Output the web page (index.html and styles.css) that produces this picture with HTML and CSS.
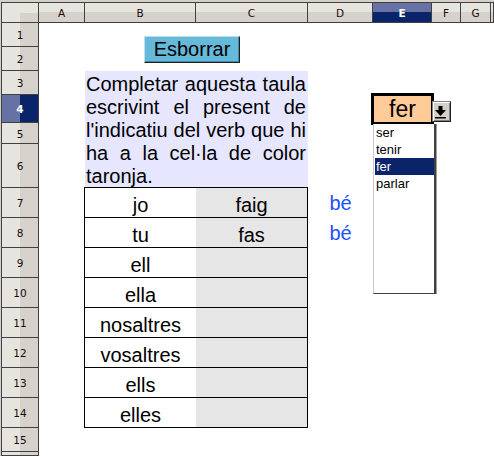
FILE: index.html
```html
<!DOCTYPE html>
<html>
<head>
<meta charset="utf-8">
<link rel="stylesheet" href="styles.css">
</head>
<body>
<div class="frame">
  <div class="corner"></div>
  <div class="colheads">
    <div class="ch">A</div>
    <div class="ch">B</div>
    <div class="ch">C</div>
    <div class="ch">D</div>
    <div class="ch sel">E</div>
    <div class="ch">F</div>
    <div class="ch">G</div>
    <div class="ch"></div>
  </div>
  <div class="rowheads">
    <div class="rh">1</div>
    <div class="rh">2</div>
    <div class="rh">3</div>
    <div class="rh sel">4</div>
    <div class="rh">5</div>
    <div class="rh">6</div>
    <div class="rh">7</div>
    <div class="rh">8</div>
    <div class="rh">9</div>
    <div class="rh">10</div>
    <div class="rh">11</div>
    <div class="rh">12</div>
    <div class="rh">13</div>
    <div class="rh">14</div>
    <div class="rh">15</div>
    <div class="rh"></div>
  </div>
  <div class="cells">
    <div class="intro">
      <span class="jline">Completar aquesta taula</span>
      <span class="jline">escrivint el present de</span>
      <span class="jline">l'indicatiu del verb que hi</span>
      <span class="jline">ha a la cel·la de color</span>
      <span class="lline">taronja.</span>
    </div>
    <div class="table">
      <div class="trow"><div class="tc">jo</div><div class="tc ans">faig</div></div>
      <div class="trow"><div class="tc">tu</div><div class="tc ans">fas</div></div>
      <div class="trow"><div class="tc">ell</div><div class="tc ans"></div></div>
      <div class="trow"><div class="tc">ella</div><div class="tc ans"></div></div>
      <div class="trow"><div class="tc">nosaltres</div><div class="tc ans"></div></div>
      <div class="trow"><div class="tc">vosaltres</div><div class="tc ans"></div></div>
      <div class="trow"><div class="tc">ells</div><div class="tc ans"></div></div>
      <div class="trow"><div class="tc">elles</div><div class="tc ans"></div></div>
    </div>
    <div class="ok ok7">bé</div>
    <div class="ok ok8">bé</div>
    <div class="verb">fer</div>

    <div class="btn">Esborrar</div>
    <div class="ddbtn">
      <svg width="19" height="21" viewBox="0 0 19 21">
        <rect x="6.5" y="5" width="4" height="5" fill="#000"/>
        <polygon points="3,9 14,9 8.5,15" fill="#000"/>
        <rect x="3" y="16" width="11" height="1.5" fill="#000"/>
      </svg>
    </div>
    <div class="list">
      <div class="item">ser</div>
      <div class="item">tenir</div>
      <div class="item hl">fer</div>
      <div class="item">parlar</div>
    </div>
  </div>
</div>
</body>
</html>
```

FILE: styles.css
```css
* { box-sizing: border-box; }
html, body { margin: 0; padding: 0; }
body { width: 494px; height: 456px; overflow: hidden; background: #fff; }

.frame {
  width: 494px;
  height: 456px;
  padding: 2px 0 0 1px;
  background: #d4d0c8;
  display: grid;
  grid-template-columns: 38px 1fr;
  grid-template-rows: 21px 1fr;
  font-family: "Liberation Sans", Arial, sans-serif;
}

.corner {
  border: 1px solid #404040;
  background:
    linear-gradient(to right, #e6e4df 50%, #d6d2cb 50%) bottom / 100% 50% no-repeat,
    #e6e4df;
}

.colheads {
  display: grid;
  grid-template-columns: 46px 111px 112px 65px 59px 29px 30px 1fr;
}
.ch {
  border-top: 1px solid #404040;
  border-bottom: 1px solid #404040;
  border-right: 1px solid #404040;
  background: linear-gradient(to bottom, #e6e4df 45%, #d6d2cb 45%);
  font-family: "DejaVu Sans", sans-serif;
  font-size: 10.5px;
  color: #1a0a0a;
  display: flex;
  align-items: center;
  justify-content: center;
  padding-top: 1px;
}
.ch.sel {
  background: linear-gradient(to bottom, #6672a3 45%, #0a246a 45%);
  color: #fff;
  font-weight: bold;
}

.rowheads {
  display: grid;
  grid-template-rows: 24px 24px 24px 28px 21px 44px repeat(8, 30px) 24px 1fr;
}
.rh {
  border-left: 1px solid #404040;
  border-right: 1px solid #404040;
  border-bottom: 1px solid #404040;
  background: linear-gradient(to right, #e6e4df 50%, #d6d2cb 50%);
  font-family: "DejaVu Sans", sans-serif;
  font-size: 10.5px;
  color: #1a0a0a;
  display: flex;
  align-items: center;
  justify-content: center;
  padding-top: 1px;
}
.rh.sel {
  background: linear-gradient(to right, #6672a3 50%, #0a246a 50%);
  color: #fff;
  font-weight: bold;
}

.cells {
  position: relative;
  background: #fff;
  display: grid;
  grid-template-columns: 46px 111px 112px 65px 59px 29px 30px 1fr;
  grid-template-rows: 24px 24px 24px 28px 21px 44px repeat(8, 30px) 24px 1fr;
}

.intro {
  grid-column: 2 / 4;
  grid-row: 3 / 7;
  background: #e6e6ff;
  padding: 2px 2px 0 1px;
  font-size: 20px;
  line-height: 23px;
  color: #000;
}
.jline {
  display: block;
  white-space: nowrap;
  text-align: justify;
  text-align-last: justify;
}
.lline {
  display: block;
  white-space: nowrap;
}

.table {
  grid-column: 2 / 4;
  grid-row: 7 / 15;
  margin: -1px 0 0 -1px;
  border: 1px solid #000;
  border-bottom: 0;
  display: flex;
  flex-direction: column;
}
.trow {
  height: 30px;
  border-bottom: 1px solid #000;
  display: grid;
  grid-template-columns: 111px 1fr;
}
.tc {
  display: flex;
  align-items: flex-end;
  justify-content: center;
  font-size: 20px;
  line-height: 23px;
  color: #000;
}
.tc.ans { background: #e6e6e6; }

.ok {
  grid-column: 4;
  display: flex;
  align-items: flex-end;
  justify-content: center;
  font-size: 20px;
  line-height: 23px;
  color: #2150ff;
  padding-bottom: 3px;
}
.ok7 { grid-row: 7; }
.ok8 { grid-row: 8; }

.verb {
  grid-column: 5;
  grid-row: 4;
  background: #ffcc99;
  box-shadow: 0 0 0 2px #000, inset 0 0 0 1px #000;
  display: flex;
  align-items: flex-end;
  justify-content: center;
  font-size: 23px;
  line-height: 26px;
  padding-bottom: 1px;
  color: #000;
}

.btn {
  position: absolute;
  left: 105px;
  top: 13px;
  width: 96px;
  height: 27px;
  background: #66b9d9;
  border-top: 1px solid #b8e2f0;
  border-left: 1px solid #b8e2f0;
  border-right: 1px solid #202020;
  border-bottom: 1px solid #202020;
  box-shadow: inset -1px -1px 0 #3c8aa8;
  display: flex;
  align-items: center;
  justify-content: center;
  font-size: 20px;
  color: #000;
  padding-bottom: 1px;
}

.ddbtn {
  position: absolute;
  left: 393px;
  top: 78px;
  width: 19px;
  height: 21px;
  background: #d4d0c8;
  border-top: 1px solid #808080;
  border-left: 1px solid #808080;
  border-right: 1px solid #202020;
  border-bottom: 1px solid #202020;
  box-shadow: inset 1px 1px 0 #fff, inset -1px -1px 0 #808080;
  display: flex;
}
.ddbtn svg { display: block; margin: -1px; }

.list {
  position: absolute;
  left: 334px;
  top: 101px;
  width: 63px;
  height: 170px;
  background: #fff;
  border-left: 1px solid #c8c8c8;
  border-right: 2px solid #404040;
  border-bottom: 1px solid #404040;
  box-shadow: 1px 0 0 #a0a0a0;
  padding: 0 0 0 1px;
  font-size: 13px;
  line-height: 17px;
  color: #000;
}
.item {
  padding-left: 1px;
  height: 17px;
}
.item.hl {
  background: #0a246a;
  color: #fff;
}
```
